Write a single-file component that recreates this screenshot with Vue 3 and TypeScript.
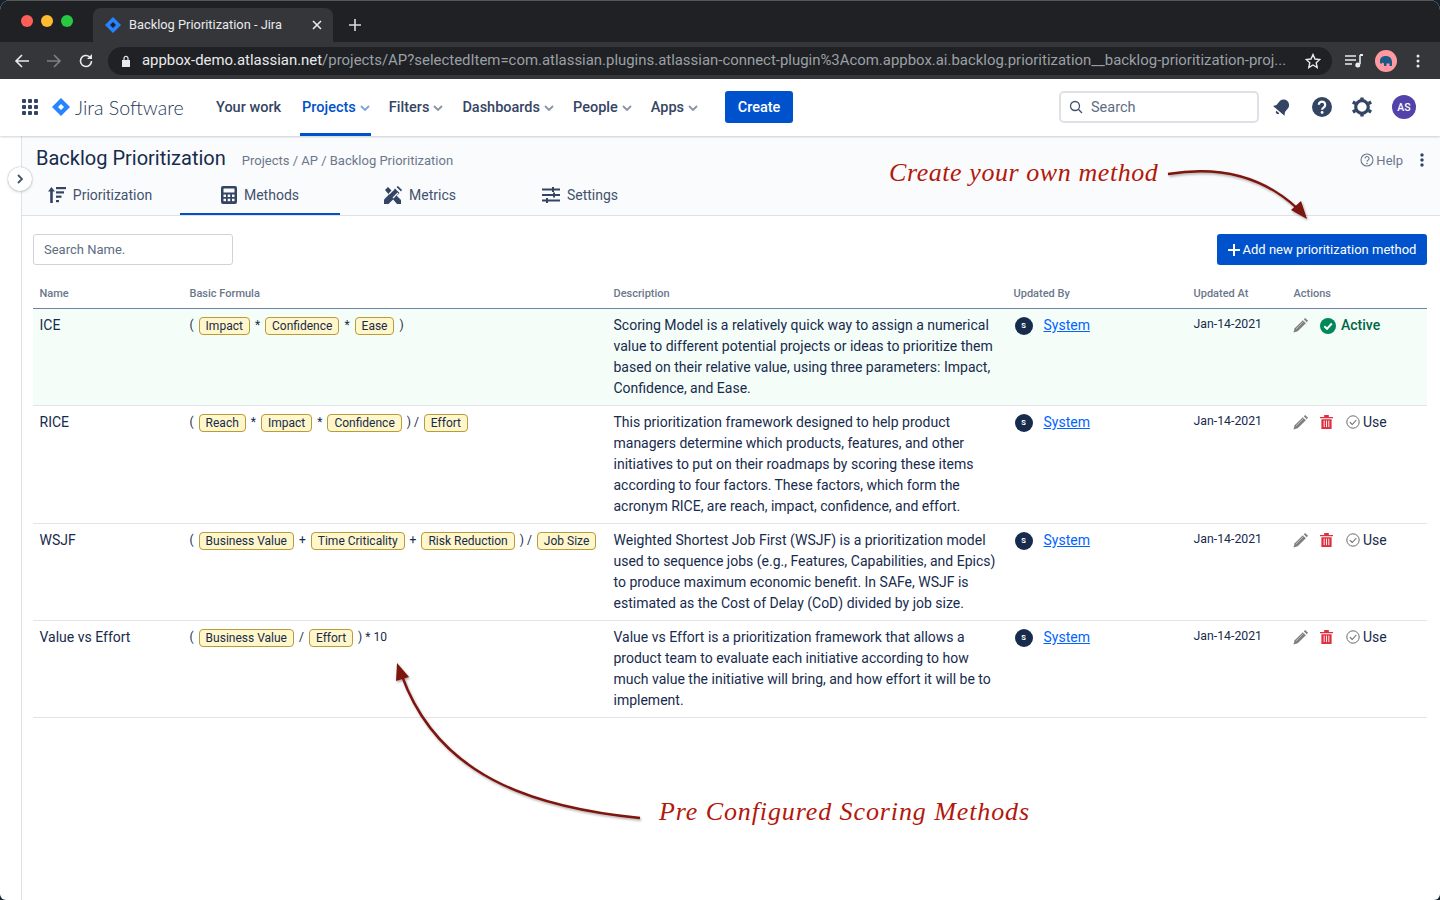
<script setup lang="ts">
type Token = { tag?: boolean; v: string }
type Method = { name: string; formula: Token[]; desc: string; active?: boolean }

const t = (v: string): Token => ({ tag: true, v })
const o = (v: string): Token => ({ v })

const methods: Method[] = [
  {
    name: 'ICE',
    active: true,
    formula: [o('('), t('Impact'), o('*'), t('Confidence'), o('*'), t('Ease'), o(')')],
    desc: 'Scoring Model is a relatively quick way to assign a numerical\nvalue to different potential projects or ideas to prioritize them\nbased on their relative value, using three parameters: Impact,\nConfidence, and Ease.'
  },
  {
    name: 'RICE',
    formula: [o('('), t('Reach'), o('*'), t('Impact'), o('*'), t('Confidence'), o(') /'), t('Effort')],
    desc: 'This prioritization framework designed to help product\nmanagers determine which products, features, and other\ninitiatives to put on their roadmaps by scoring these items\naccording to four factors. These factors, which form the\nacronym RICE, are reach, impact, confidence, and effort.'
  },
  {
    name: 'WSJF',
    formula: [o('('), t('Business Value'), o('+'), t('Time Criticality'), o('+'), t('Risk Reduction'), o(') /'), t('Job Size')],
    desc: 'Weighted Shortest Job First (WSJF) is a prioritization model\nused to sequence jobs (e.g., Features, Capabilities, and Epics)\nto produce maximum economic benefit. In SAFe, WSJF is\nestimated as the Cost of Delay (CoD) divided by job size.'
  },
  {
    name: 'Value vs Effort',
    formula: [o('('), t('Business Value'), o('/'), t('Effort'), o(') * 10')],
    desc: 'Value vs Effort is a prioritization framework that allows a\nproduct team to evaluate each initiative according to how\nmuch value the initiative will bring, and how effort it will be to\nimplement.'
  }
]
const navItems = ['Filters', 'Dashboards', 'People', 'Apps']
</script>

<template>
  <div class="window">
    <div class="tabstrip">
      <div class="lights"><i class="l red"></i><i class="l amber"></i><i class="l green"></i></div>
      <div class="tab">
        <svg class="favicon" viewBox="0 0 16 16"><path d="M8 0 16 8 8 16 0 8Z" fill="#2684ff" /><path d="M8 5 11 8 8 11 5 8Z" fill="#202124" /></svg>
        <span class="tab-title">Backlog Prioritization - Jira</span>
        <svg class="tab-x" viewBox="0 0 10 10"><path d="M1 1 9 9M9 1 1 9" stroke="#e8eaed" stroke-width="1.6" /></svg>
      </div>
      <svg class="newtab" viewBox="0 0 12 12"><path d="M6 0V12M0 6H12" stroke="#dadce0" stroke-width="1.6" /></svg>
    </div>
    <div class="toolbar">
      <svg class="tb" viewBox="0 0 16 16"><path d="M15 8H2M8 2 2 8l6 6" fill="none" stroke="#e8eaed" stroke-width="1.6" /></svg>
      <svg class="tb" viewBox="0 0 16 16"><path d="M1 8H14M8 2l6 6-6 6" fill="none" stroke="#7d8085" stroke-width="1.6" /></svg>
      <svg class="tb" viewBox="0 0 16 16"><path d="M13.5 8A5.5 5.5 0 1 1 11.6 3.8" fill="none" stroke="#e8eaed" stroke-width="1.6" /><path d="M14 1v5H9Z" fill="#e8eaed" /></svg>
      <div class="omnibox">
        <svg class="lock" viewBox="0 0 10 12"><path d="M1 5h8v7H1Z" fill="#e8eaed" /><path d="M3 5V3.3a2 2 0 0 1 4 0V5" fill="none" stroke="#e8eaed" stroke-width="1.2" /></svg>
        <div class="url"><b>appbox-demo.atlassian.net</b>/projects/AP?selectedItem=com.atlassian.plugins.atlassian-connect-plugin%3Acom.appbox.ai.backlog.prioritization__backlog-prioritization-proj...</div>
        <svg class="star" viewBox="0 0 16 16"><path d="M8 1.5 10 6l4.8.5-3.6 3.2 1 4.8L8 12l-4.2 2.5 1-4.8L1.2 6.5 6 6Z" fill="none" stroke="#e8eaed" stroke-width="1.4" /></svg>
      </div>
      <svg class="media" viewBox="0 0 18 14"><path d="M0 2H11M0 6H11M0 10H7" stroke="#e8eaed" stroke-width="1.6" /><path d="M15 1V10" stroke="#e8eaed" stroke-width="1.6" /><path d="M15 1H18" stroke="#e8eaed" stroke-width="2" /><circle cx="12.8" cy="11" r="2.5" fill="#e8eaed" /></svg>
      <div class="profile"><svg viewBox="0 0 14 12"><path d="M1 6C1 2 4 1 7 1s6 2 6 6v4h-2.500V8.500h-3V11H5V8.500L3 7.500 2.500 9 1 8Z" fill="#1c5a86" /></svg></div>
      <svg class="kebab" viewBox="0 0 4 14"><circle cx="2" cy="2" r="1.5" fill="#e8eaed" /><circle cx="2" cy="7" r="1.5" fill="#e8eaed" /><circle cx="2" cy="12" r="1.5" fill="#e8eaed" /></svg>
    </div>

    <nav class="nav">
      <svg class="apps" viewBox="0 0 16 16"><g fill="#344563"><rect x="0" y="0" width="4" height="4" rx="1" /><rect x="6" y="0" width="4" height="4" rx="1" /><rect x="12" y="0" width="4" height="4" rx="1" /><rect x="0" y="6" width="4" height="4" rx="1" /><rect x="6" y="6" width="4" height="4" rx="1" /><rect x="12" y="6" width="4" height="4" rx="1" /><rect x="0" y="12" width="4" height="4" rx="1" /><rect x="6" y="12" width="4" height="4" rx="1" /><rect x="12" y="12" width="4" height="4" rx="1" /></g></svg>
      <svg class="logo" viewBox="0 0 18 18"><path d="M9 0 18 9 9 18 0 9Z" fill="#2684ff" /><path d="M9 6 12 9 9 12 6 9Z" fill="#fff" /></svg>
      <span class="brand">Jira Software</span>
      <span class="nav-item first">Your work</span>
      <span class="nav-item current">Projects<svg class="chev" viewBox="0 0 10 6"><path d="M1 1 5 5 9 1" fill="none" stroke="#7aa3e0" stroke-width="1.8" /></svg></span>
      <span v-for="n in navItems" :key="n" class="nav-item">{{ n }}<svg class="chev" viewBox="0 0 10 6"><path d="M1 1 5 5 9 1" fill="none" stroke="#8993a4" stroke-width="1.8" /></svg></span>
      <button class="create">Create</button>
      <div class="nav-search">
        <svg viewBox="0 0 14 14"><circle cx="6" cy="6" r="4.5" fill="none" stroke="#42526e" stroke-width="1.3" /><path d="M9.3 9.300 13 13" stroke="#42526e" stroke-width="1.3" /></svg>
        <span>Search</span>
      </div>
      <svg class="ni bell" viewBox="0 0 20 20"><g transform="rotate(40 10 10)"><path d="M10 2a5.500 5.500 0 0 0-5.500 5.500V12L2.500 15h15l-2-3V7.500A5.500 5.500 0 0 0 10 2Z" fill="#344563" /><path d="M8 16.500h4a2 2 0 0 1-4 0Z" fill="#344563" /></g></svg>
      <svg class="ni" viewBox="0 0 20 20"><circle cx="10" cy="10" r="10" fill="#344563" /><path d="M6.800 7.800a3.200 3.200 0 1 1 4.800 2.800c-1 .6-1.500 1-1.500 2.100" fill="none" stroke="#fff" stroke-width="2.2" /><circle cx="10.100" cy="15.500" r="1.4" fill="#fff" /></svg>
      <svg class="ni" viewBox="0 0 20 20"><circle cx="10" cy="10" r="6.300" fill="none" stroke="#344563" stroke-width="3.2" /><g stroke="#344563" stroke-width="3.4"><path d="M10 0.500v3M10 16.500v3M0.800 5l2.600 1.500M16.600 13.500 19.200 15M0.800 15l2.600-1.500M16.600 6.500 19.200 5" /></g></svg>
      <div class="avatar">AS</div>
    </nav>

    <div class="body">
      <aside class="side"><div class="collapse"><svg viewBox="0 0 6 10"><path d="M1 1 5 5 1 9" fill="none" stroke="#42526e" stroke-width="1.8" /></svg></div></aside>
      <main class="main">
        <header class="head">
          <div class="head-top">
            <h1>Backlog Prioritization</h1>
            <span class="crumbs">Projects / AP / Backlog Prioritization</span>
            <span class="help">
              <svg viewBox="0 0 14 14"><circle cx="7" cy="7" r="6" fill="none" stroke="#6b778c" stroke-width="1.1" /><path d="M5 5.500a2 2 0 1 1 3 1.700c-.7.400-1 .7-1 1.500" fill="none" stroke="#6b778c" stroke-width="1.1" /><circle cx="7" cy="10.500" r=".8" fill="#6b778c" /></svg>
              Help
            </span>
            <svg class="head-kebab" viewBox="0 0 4 14"><circle cx="2" cy="2" r="1.7" fill="#344563" /><circle cx="2" cy="7" r="1.7" fill="#344563" /><circle cx="2" cy="12" r="1.7" fill="#344563" /></svg>
          </div>
          <div class="tabs">
            <div class="ptab">
              <svg viewBox="0 0 18 18"><g fill="#344563"><path d="M3.500 1 7 5.500H4.800V17H2.200V5.500H0Z" /><rect x="8" y="1" width="10" height="2.2" /><rect x="8" y="5.300" width="8" height="2.2" /><rect x="8" y="9.600" width="5.500" height="2.2" /><rect x="8" y="14" width="3" height="2.2" /></g></svg>
              Prioritization
            </div>
            <div class="ptab on">
              <svg viewBox="0 0 16 18"><path d="M2 0h12a2 2 0 0 1 2 2v14a2 2 0 0 1-2 2H2a2 2 0 0 1-2-2V2a2 2 0 0 1 2-2Z" fill="#344563" /><rect x="2.500" y="2.500" width="11" height="4" fill="#fafbfc" /><g fill="#fafbfc"><rect x="2.500" y="8.500" width="2.5" height="2.5" /><rect x="6.700" y="8.500" width="2.5" height="2.5" /><rect x="11" y="8.500" width="2.5" height="2.5" /><rect x="2.500" y="12.700" width="2.5" height="2.5" /><rect x="6.700" y="12.700" width="2.5" height="2.5" /><rect x="11" y="12.700" width="2.5" height="2.5" /></g></svg>
              Methods
            </div>
            <div class="ptab">
              <svg viewBox="0 0 18 18"><g fill="#344563"><path d="M0 13.500 11 2.500 15.500 7 4.500 18H0Z" /><path d="M12.500 1 14 0l4 4-1 1.500Z" /><path d="M1 4 4 1 17 14v4h-4Z" /></g><path d="M5 8 10 3M9 12l5-5" stroke="#fafbfc" stroke-width="1.3" /></svg>
              Metrics
            </div>
            <div class="ptab">
              <svg viewBox="0 0 18 18"><g fill="#344563"><rect x="0" y="2.500" width="18" height="2" /><rect x="0" y="8" width="18" height="2" /><rect x="0" y="13.500" width="18" height="2" /><rect x="10" y="1" width="2" height="5" /><rect x="11" y="6.500" width="2" height="5" /><rect x="4" y="12" width="2" height="5" /></g></svg>
              Settings
            </div>
          </div>
        </header>

        <section class="content">
          <div class="toolrow">
            <div class="search-name">Search Name.</div>
            <button class="add"><svg viewBox="0 0 12 12"><path d="M6 0V12M0 6H12" stroke="#fff" stroke-width="2" /></svg>Add new prioritization method</button>
          </div>
          <div class="thead row">
            <div>Name</div><div>Basic Formula</div><div>Description</div><div>Updated By</div><div>Updated At</div><div>Actions</div>
          </div>
          <div v-for="m in methods" :key="m.name" class="row tr" :class="{ active: m.active }">
            <div>{{ m.name }}</div>
            <div class="formula">
              <template v-for="(tok, i) in m.formula" :key="i">
                <span v-if="tok.tag" class="tag">{{ tok.v }}</span>
                <span v-else class="op">{{ tok.v }}</span>
              </template>
            </div>
            <div class="desc">{{ m.desc }}</div>
            <div class="by"><span class="s">S</span><a class="link">System</a></div>
            <div class="date">Jan-14-2021</div>
            <div class="actions">
              <svg class="pencil" viewBox="0 0 16 16"><path d="M0.500 15.500 1.800 11 10.500 2.300 13.700 5.500 5 14.200Z" fill="#7f7f7f" /><path d="M11.500 1.300 13 0 16 3 14.700 4.500Z" fill="#7f7f7f" /><path d="M3.200 11.700 11.200 3.700" stroke="#d0d0d0" stroke-width=".8" /></svg>
              <template v-if="m.active">
                <svg class="check" viewBox="0 0 16 16"><circle cx="8" cy="8" r="8" fill="#00875a" /><path d="M4.300 8.200 7 10.800 11.800 5.500" fill="none" stroke="#fff" stroke-width="2" /></svg>
                <span class="activetxt">Active</span>
              </template>
              <template v-else>
                <svg class="trash" viewBox="0 0 14 15"><path d="M0 2H14V3.500H0ZM4.500 0h5v2h-5ZM1.500 4.500h11V15h-11Z" fill="#de2f3f" /><path d="M4.500 6v7M7 6v7M9.500 6v7" stroke="#fff" stroke-width="1" /></svg>
                <svg class="use" viewBox="0 0 14 14"><circle cx="7" cy="7" r="6.2" fill="none" stroke="#6b6b6b" stroke-width="1" /><path d="M3.800 7.200 6.200 9.500 10.300 5" fill="none" stroke="#6b6b6b" stroke-width="1.1" /></svg>
                <span>Use</span>
              </template>
            </div>
          </div>
        </section>
      </main>
    </div>

    <svg class="overlay" viewBox="0 0 1440 900">
      <defs>
        <filter id="sh" x="-10%" y="-10%" width="120%" height="120%"><feDropShadow dx="1" dy="1.5" stdDeviation="1" flood-color="#000" flood-opacity=".35" /></filter>
      </defs>
      <g filter="url(#sh)">
        <path d="M1168 174C1222 165 1264 177 1298 209" fill="none" stroke="#7d120a" stroke-width="2.4" />
        <path d="M1307 219 1291 210 1301 201Z" fill="#7d120a" />
        <path d="M640 818C530 807 438 775 402 676" fill="none" stroke="#7d120a" stroke-width="2.4" />
        <path d="M397 663 409 677 396 681Z" fill="#7d120a" />
      </g>
    </svg>
    <div class="note note-a">Create your own method</div>
    <div class="note note-b">Pre Configured Scoring Methods</div>
  </div>
</template>

<style>
html, body { margin: 0; background: #16202e; }
</style>

<style scoped>
.window { position: relative; width: 1440px; height: 900px; overflow: hidden; display: flex; flex-direction: column; background: #fff; border-radius: 10px 10px 6px 6px; font-family: Roboto, "Liberation Sans", sans-serif; color: #172b4d; }
.tabstrip { height: 41px; flex: none; background: #202124; border-top: 1px solid #55575b; display: flex; align-items: flex-end; box-sizing: content-box; }
.lights { display: flex; gap: 8px; width: 93px; padding: 0 0 15px 21px; box-sizing: border-box; }
.l { width: 12px; height: 12px; border-radius: 50%; display: block; }
.red { background: #ff5f57; } .amber { background: #febc2e; } .green { background: #28c840; }
.tab { width: 240px; height: 34px; background: #35363a; border-radius: 8px 8px 0 0; display: flex; align-items: center; padding: 0 11px 0 12px; box-sizing: border-box; }
.favicon { width: 16px; height: 16px; }
.tab-title { margin-left: 8px; flex: 1; color: #e8eaed; font-size: 12.84px; white-space: nowrap; padding-bottom: 1px; }
.tab-x { width: 10px; height: 10px; }
.newtab { width: 12px; height: 12px; margin: 0 0 11px 16px; }
.toolbar { height: 37px; flex: none; background: #35363a; display: flex; align-items: center; padding-left: 14px; box-sizing: border-box; }
.tb { width: 16px; height: 16px; margin-right: 16px; }
.omnibox { width: 1224px; height: 28px; margin-left: -2px; background: #202124; border-radius: 14px; display: flex; align-items: center; padding: 0 11px 0 13px; box-sizing: border-box; }
.lock { width: 10px; height: 12px; flex: none; }
.url { flex: 1; margin: 0 11px 1px 11px; color: #9aa0a6; font-size: 14.93px; white-space: nowrap; overflow: hidden; }
.url b { font-weight: 400; color: #e8eaed; }
.star { width: 16px; height: 16px; flex: none; }
.media { width: 18px; height: 14px; margin-left: 13px; }
.profile { width: 22px; height: 22px; margin-left: 12px; background: #ff9aa2; border-radius: 50%; display: flex; align-items: center; justify-content: center; }
.profile svg { width: 14px; height: 12px; }
.kebab { width: 4px; height: 14px; margin-left: 19px; }

.nav { height: 57px; flex: none; display: flex; align-items: center; background: #fff; padding-left: 22px; box-sizing: border-box; box-shadow: 0 1px 2px rgba(9, 30, 66, .2); position: relative; z-index: 2; }
.apps { width: 16px; height: 16px; margin-bottom: 1px; }
.logo { width: 18px; height: 18px; margin: 0 0 1px 14px; }
.brand { margin: 0 0 1px 5px; width: 112px; font-family: Lato, sans-serif; font-size: 19.6px; font-weight: 300; color: #253858; white-space: nowrap; }
.nav-item { display: flex; align-items: center; height: 57px; font-size: 14.5px; font-weight: 500; color: #344563; margin-right: 19px; white-space: nowrap; box-sizing: border-box; }
.nav-item.first { margin-left: 29px; margin-right: 21px; }
.current { color: #0052cc; border-bottom: 3px solid #0052cc; padding: 3px 1px 0 2px; margin-left: -2px; margin-right: 18px; }
.chev { width: 10px; height: 6px; margin-left: 4px; }
.create { width: 68px; height: 32px; margin: 0 0 1px 8px; background: #0052cc; color: #fff; border: 0; border-radius: 3px; font: 500 14.5px Roboto, sans-serif; }
.nav-search { width: 200px; height: 32px; margin: 0 0 1px auto; border: 2px solid #dfe1e6; border-radius: 5px; display: flex; align-items: center; padding-left: 8px; box-sizing: border-box; color: #5e6c84; font-size: 14.5px; }
.nav-search svg { width: 14px; height: 14px; margin-right: 8px; }
.ni { width: 20px; height: 20px; margin: 0 0 1px 20px; }
.ni.bell { margin-left: 13px; }
.avatar { width: 24px; height: 24px; margin: 0 24px 1px 20px; border-radius: 50%; background: #5243aa; color: #fff; font-size: 10.5px; font-weight: 500; display: flex; align-items: center; justify-content: center; }

.body { flex: 1; display: flex; min-height: 0; }
.side { width: 22px; flex: none; border-right: 1px solid #dfe1e6; box-sizing: border-box; position: relative; }
.collapse { position: absolute; left: 8px; top: 31px; width: 24px; height: 24px; border-radius: 50%; background: #fff; box-shadow: 0 0 1px rgba(9, 30, 66, .45), 0 1px 3px rgba(9, 30, 66, .2); display: flex; align-items: center; justify-content: center; z-index: 3; }
.collapse svg { width: 6px; height: 10px; }
.main { flex: 1; min-width: 0; }
.head { height: 80px; background: #fafbfc; border-bottom: 1px solid #dfe1e6; box-sizing: border-box; position: relative; }
.head-top { height: 44px; display: flex; align-items: center; padding: 0 16px 0 14px; }
h1 { margin: 0; font-size: 20px; font-weight: 400; color: #172b4d; white-space: nowrap; }
.crumbs { margin-left: 16px; padding-top: 5px; font-size: 13px; color: #6b778c; }
.help { margin-left: auto; display: flex; align-items: center; gap: 2px; font-size: 13px; color: #6b778c; padding-top: 4px; }
.help svg { width: 14px; height: 14px; }
.head-kebab { width: 4px; height: 14px; margin: 4px 0 0 17px; }
.tabs { display: flex; margin-left: -2px; }
.ptab { width: 160px; height: 35px; box-sizing: border-box; padding-bottom: 6px; display: flex; align-items: center; justify-content: center; gap: 7px; font-size: 14px; color: #42526e; white-space: nowrap; }
.ptab svg { width: 18px; height: 18px; }
.ptab.on { border-bottom: 2px solid #0052cc; padding-bottom: 4px; }
.ptab.on svg { width: 16px; }

.content { padding: 18px 13px 0 11px; }
.toolrow { display: flex; justify-content: space-between; height: 31px; }
.search-name { width: 200px; height: 31px; box-sizing: border-box; border: 1px solid #cfd3d9; border-radius: 3px; padding-left: 10px; line-height: 29px; font-size: 13px; color: #5e6c84; }
.add { width: 210px; height: 31px; border: 0; border-radius: 3px; background: #0052cc; color: #fff; font: 400 13px Roboto, sans-serif; display: flex; align-items: center; justify-content: center; gap: 3px; white-space: nowrap; padding: 0; }
.add svg { width: 12px; height: 12px; }
.row { display: grid; grid-template-columns: 150px 424px 400px 180px 100px 140px; }
.row > div { padding-left: 6.5px; box-sizing: border-box; }
.thead { margin-top: 20px; height: 24px; border-bottom: 1px solid #6f82a3; font-size: 11px; font-weight: 500; color: #6b778c; line-height: 18px; box-sizing: border-box; }
.tr { border-bottom: 1px solid #e1e4e8; font-size: 14px; line-height: 21px; color: #172b4d; box-sizing: content-box; }
.tr > div { padding-top: 6px; padding-bottom: 6px; }
.tr.active { background: #f5fdf8; }
.formula { display: flex; align-items: flex-start; gap: 5px; white-space: nowrap; font-size: 12px; }
.op { line-height: 21px; }
.tag { height: 18px; margin-top: 2px; box-sizing: border-box; line-height: 16px; padding: 0 6px; background: #fff6c9; border: 1px solid #b89b3a; border-radius: 4px; color: #172b4d; }
.desc { white-space: pre-line; }
.by { display: flex; align-items: flex-start; }
.s { width: 18px; height: 18px; margin: 2px 11px 0 1px; border-radius: 50%; background: #172b4d; color: #fff; font-size: 7.5px; font-weight: 700; line-height: 18px; text-align: center; flex: none; }
.link { color: #0065ff; text-decoration: underline; }
.tr > .date { font-size: 12.3px; line-height: 17px; padding-top: 7px; }
.actions { display: flex; align-items: flex-start; white-space: nowrap; }
.pencil { width: 15px; height: 15px; margin: 3px 12px 0 -.5px; flex: none; }
.check { width: 16px; height: 16px; margin: 2.5px 5px 0 0; flex: none; }
.activetxt { color: #006644; font-weight: 500; }
.trash { width: 13px; height: 14px; margin: 3px 13px 0 0; flex: none; }
.use { width: 14px; height: 14px; margin: 3px 3px 0 0; flex: none; }

.overlay { position: absolute; left: 0; top: 0; width: 1440px; height: 900px; pointer-events: none; z-index: 4; }
.note { position: absolute; z-index: 5; color: #b3180c; font-family: "Liberation Serif", serif; font-style: italic; font-size: 26px; line-height: 30px; white-space: nowrap; }
.note-a { left: 889px; top: 158px; letter-spacing: .57px; }
.note-b { left: 659px; top: 797px; letter-spacing: .9px; }
</style>
